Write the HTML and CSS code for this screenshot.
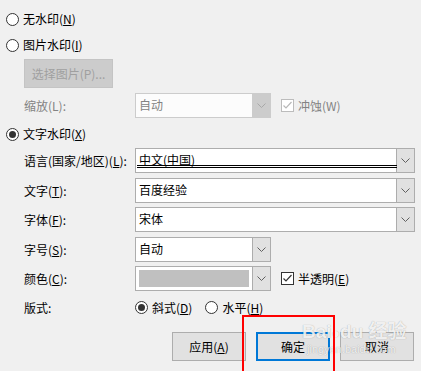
FILE: index.html
```html
<!DOCTYPE html>
<html>
<head>
<meta charset="utf-8">
<link rel="stylesheet" href="styles.css">
</head>
<body>
<div class="dlg">
  <div class="radio-row r1"><span class="radio"></span><span>无水印(<u>N</u>)</span></div>
  <div class="radio-row r2"><span class="radio"></span><span>图片水印(<u>I</u>)</span></div>
  <div class="btn-disabled">选择图片(P)...</div>
  <div class="row scale-row">
    <span class="label dis">缩放(L):</span>
    <div class="combo short disabled"><span class="val">自动</span><span class="arrow"><svg width="9" height="5" viewBox="0 0 9 5"><path d="M0.5 0.5 L4.5 4.5 L8.5 0.5" fill="none" stroke="#a8a8a8" stroke-width="1"/></svg></span></div>
    <div class="check disabled"><span class="box"><svg width="11" height="11" viewBox="0 0 11 11"><path d="M1.5 5.5 L4 8 L9.5 2" fill="none" stroke="#b8b8b8" stroke-width="1.2"/></svg></span><span>冲蚀(W)</span></div>
  </div>
  <div class="radio-row r3"><span class="radio on"></span><span>文字水印(<u>X</u>)</span></div>
  <div class="combos">
    <div class="row">
      <span class="label">语言(国家/地区)(<u>L</u>):</span>
      <div class="combo long"><span class="val sel">中文(中国)</span><span class="arrow"><svg width="9" height="5" viewBox="0 0 9 5"><path d="M0.5 0.5 L4.5 4.5 L8.5 0.5" fill="none" stroke="#606060" stroke-width="1"/></svg></span></div>
    </div>
    <div class="row">
      <span class="label">文字(<u>T</u>):</span>
      <div class="combo long"><span class="val">百度经验</span><span class="arrow"><svg width="9" height="5" viewBox="0 0 9 5"><path d="M0.5 0.5 L4.5 4.5 L8.5 0.5" fill="none" stroke="#606060" stroke-width="1"/></svg></span></div>
    </div>
    <div class="row">
      <span class="label">字体(<u>F</u>):</span>
      <div class="combo long"><span class="val">宋体</span><span class="arrow"><svg width="9" height="5" viewBox="0 0 9 5"><path d="M0.5 0.5 L4.5 4.5 L8.5 0.5" fill="none" stroke="#606060" stroke-width="1"/></svg></span></div>
    </div>
    <div class="row">
      <span class="label">字号(<u>S</u>):</span>
      <div class="combo short"><span class="val">自动</span><span class="arrow"><svg width="9" height="5" viewBox="0 0 9 5"><path d="M0.5 0.5 L4.5 4.5 L8.5 0.5" fill="none" stroke="#606060" stroke-width="1"/></svg></span></div>
    </div>
    <div class="row">
      <span class="label">颜色(<u>C</u>):</span>
      <div class="combo short"><span class="swatch"></span><span class="arrow"><svg width="9" height="5" viewBox="0 0 9 5"><path d="M0.5 0.5 L4.5 4.5 L8.5 0.5" fill="none" stroke="#606060" stroke-width="1"/></svg></span></div>
      <div class="check"><span class="box dark"><svg width="11" height="11" viewBox="0 0 11 11"><path d="M1.5 5.5 L4 8 L9.5 2" fill="none" stroke="#333" stroke-width="1.2"/></svg></span><span>半透明(<u>E</u>)</span></div>
    </div>
  </div>
  <div class="row layout-row">
    <span class="label">版式:</span>
    <div class="opt"><span class="radio sm on"></span><span>斜式(<u>D</u>)</span></div>
    <div class="opt"><span class="radio sm"></span><span>水平(<u>H</u>)</span></div>
  </div>
  <div class="buttons">
    <div class="btn">应用(<u>A</u>)</div>
    <div class="btn default">确定</div>
    <div class="btn">取消</div>
  </div>
  <div class="wm">
    <div class="wm-logo">Bai<span class="paw">&#9679;</span>du 经验</div>
    <div class="wm-url">jingyan.baidu.com</div>
  </div>
  <div class="redbox"></div>
</div>
</body>
</html>
```
FILE: styles.css
```css
html, body {
  margin: 0;
  padding: 0;
  background: #f0f0f0;
}
body {
  width: 421px;
  height: 371px;
  overflow: hidden;
  font-family: "Noto Sans CJK SC", "Microsoft YaHei", sans-serif;
  font-size: 12px;
  color: #000;
}
u { text-decoration: underline; text-underline-offset: 1px; }
.dlg {
  position: relative;
  width: 421px;
  height: 371px;
  display: flex;
  flex-direction: column;
}
.radio-row {
  display: flex;
  align-items: center;
  height: 14px;
  padding-left: 6px;
  gap: 4px;
  line-height: 14px;
}
.r1 { margin-top: 12px; }
.r2 { margin-top: 12px; }
.r3 { margin-top: 9px; }
.radio {
  box-sizing: border-box;
  width: 13px;
  height: 13px;
  border: 1px solid #333;
  border-radius: 50%;
  background: #fff;
  flex: none;
  position: relative;
}
.radio.on::after {
  content: "";
  position: absolute;
  left: 2px; top: 2px;
  width: 7px; height: 7px;
  border-radius: 50%;
  background: #333;
}
.radio.sm { width: 13px; height: 13px; }
.btn-disabled {
  box-sizing: border-box;
  margin: 7px 0 0 24px;
  width: 89px;
  height: 29px;
  background: #cccccc;
  border: 1px solid #c4c4c4;
  color: #a0a0a0;
  display: flex;
  align-items: center;
  justify-content: center;
}
.row {
  display: flex;
  align-items: center;
  height: 25px;
  position: relative;
}
.scale-row { margin-top: 5px; }
.label {
  width: 111px;
  padding-left: 24px;
  flex: none;
}
.label.dis { color: #838383; }
.combo {
  box-sizing: border-box;
  height: 25px;
  border: 1px solid #adadad;
  background: #fff;
  display: flex;
  align-items: stretch;
  flex: none;
}
.combo.long { width: 280px; }
.combo.short { width: 136px; }
.combo .val {
  flex: 1;
  padding-left: 3px;
  line-height: 22px;
}
.combo .val.sel {
  margin: 0 0 0 1px;
  padding-left: 2px;
  position: relative;
}
.combo .val.sel::after {
  content: "";
  position: absolute;
  left: 0; right: -1px;
  bottom: 4px;
  border-bottom: 3px double #000;
}
.combo .arrow {
  width: 17px;
  flex: none;
  border-left: 1px solid #adadad;
  background: #e1e1e1;
  display: flex;
  align-items: center;
  justify-content: center;
}
.combo.disabled { border-color: #cccccc; background: #fcfcfc; }
.combo.disabled .val { color: #838383; }
.combo.disabled .arrow { background: #cccccc; border-left-color: #cccccc; }
.swatch {
  flex: 1;
  margin: 3px 3px 3px 3px;
  background: #c0c0c0;
}
.check {
  display: flex;
  align-items: center;
  margin-left: 10px;
  gap: 4px;
}
.check .box {
  box-sizing: border-box;
  width: 13px;
  height: 13px;
  border: 1px solid #bcbcbc;
  background: #fff;
  display: flex;
  align-items: center;
  justify-content: center;
}
.check .box.dark { border-color: #333; }
.check.disabled span:last-child { color: #838383; }
.combos {
  margin-top: 7px;
  display: flex;
  flex-direction: column;
  gap: 4.5px;
}
.layout-row { margin-top: 9px; height: 14px; }
.opt {
  display: flex;
  align-items: center;
  gap: 4px;
  margin-right: 13px;
}
.buttons {
  margin-top: 18px;
  display: flex;
  justify-content: flex-end;
  gap: 10px;
  padding-right: 7px;
}
.btn {
  box-sizing: border-box;
  width: 74px;
  height: 29px;
  background: #e1e1e1;
  border: 1px solid #adadad;
  display: flex;
  align-items: center;
  justify-content: center;
}
.btn.default { border: 2px solid #0078d7; }
.wm {
  position: absolute;
  left: 302px;
  top: 322px;
  color: rgba(255,255,255,0.85);
  text-shadow: 0 0 1px rgba(0,0,0,0.35);
  font-family: "Liberation Sans", "Noto Sans CJK SC", sans-serif;
  pointer-events: none;
}
.wm-logo { font-size: 19px; font-weight: bold; line-height: 20px; }
.wm-logo .paw { font-size: 14px; }
.wm-url { font-size: 11px; line-height: 12px; margin-left: 5px; }
.redbox {
  position: absolute;
  left: 242px;
  top: 315px;
  width: 93px;
  height: 70px;
  box-sizing: border-box;
  border: 2px solid #ff0000;
}
```
